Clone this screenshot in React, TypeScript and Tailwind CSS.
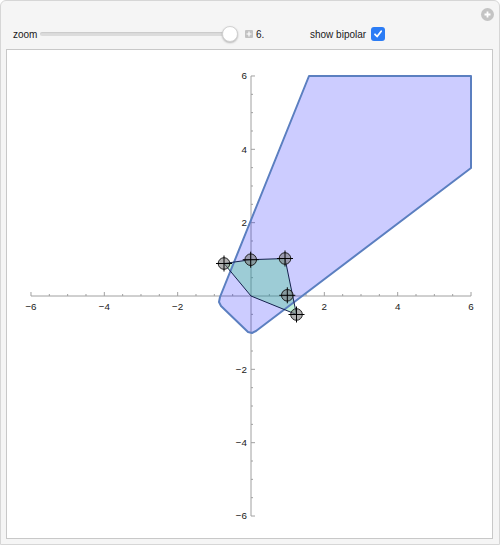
import React from "react";

const ORIGIN_X = 251;
const ORIGIN_Y = 295;
const UNIT = 36.67;

const px = (v: number) => ORIGIN_X + v * UNIT;
const py = (v: number) => ORIGIN_Y - v * UNIT;

const ticks: number[] = [];
for (let i = -12; i <= 12; i++) ticks.push(i / 2);

const labels = [-6, -4, -2, 2, 4, 6];

const bluePoints = "309,75 471,75 471,167 256,330 252,332 248,331 221,305 219,301 220,296";
const smallPoints = "224,262.5 250.7,258.7 285,257.5 296.5,313.5 251,295";

const locators: [number, number][] = [
  [224, 262.5],
  [250.7, 258.7],
  [285, 257.5],
  [287.3, 294.3],
  [296.5, 313.5],
];

const Locator = ({ x, y }: { x: number; y: number }) => (
  <g>
    <circle cx={x} cy={y} r={5.8} fill="#7a7a7a" fillOpacity={0.6} stroke="#1e1e1e" strokeWidth={1} />
    <line x1={x - 8} y1={y} x2={x + 8} y2={y} stroke="#000" strokeWidth={1} />
    <line x1={x} y1={y - 8} x2={x} y2={y + 8} stroke="#000" strokeWidth={1} />
  </g>
);

const Plot = () => (
  <svg
    width={485}
    height={488}
    viewBox="7 49 485 488"
    style={{ fontFamily: '"Liberation Sans", Arial, sans-serif' }}
  >
    {/* axes */}
    <line x1={px(-6)} y1={ORIGIN_Y} x2={px(6)} y2={ORIGIN_Y} stroke="#a0a0a0" strokeWidth={1} />
    <line x1={ORIGIN_X} y1={py(6)} x2={ORIGIN_X} y2={py(-6)} stroke="#a0a0a0" strokeWidth={1} />
    {ticks.map((t) => {
      if (t === 0) return null;
      const major = t % 2 === 0;
      const len = major ? 4 : 2;
      return (
        <g key={t}>
          <line x1={px(t)} y1={ORIGIN_Y} x2={px(t)} y2={ORIGIN_Y - len} stroke="#a0a0a0" strokeWidth={1} />
          <line x1={ORIGIN_X} y1={py(t)} x2={ORIGIN_X + len} y2={py(t)} stroke="#a0a0a0" strokeWidth={1} />
        </g>
      );
    })}
    {labels.map((v) => (
      <text key={"x" + v} x={px(v)} y={308.5} fontSize={9.8} textAnchor="middle" fill="#1a1a1a">
        {v < 0 ? "\u2212" + Math.abs(v) : v}
      </text>
    ))}
    {labels.map((v) => (
      <text key={"y" + v} x={247} y={py(v) + 3.4} fontSize={9.8} textAnchor="end" fill="#1a1a1a">
        {v < 0 ? "\u2212" + Math.abs(v) : v}
      </text>
    ))}

    {/* regions */}
    <polygon points={bluePoints} fill="#0000ff" fillOpacity={0.2} />
    <polygon points={smallPoints} fill="#32cd78" fillOpacity={0.3} />
    <polygon
      points={bluePoints}
      fill="none"
      stroke="#5b7fc0"
      strokeWidth={2}
      strokeLinejoin="round"
    />
    <polygon points={smallPoints} fill="none" stroke="#15214d" strokeWidth={1} strokeLinejoin="round" />

    {locators.map(([x, y], i) => (
      <Locator key={i} x={x} y={y} />
    ))}
  </svg>
);

const App = () => {
  return (
    <div
      className="w-[500px] h-[545px] bg-[#f5f5f5] border border-[#d6d6d6] rounded-t-[6px] overflow-hidden text-[#1a1a1a]"
      style={{ fontFamily: '"Liberation Sans", Arial, sans-serif' }}
    >
      <div className="flex justify-end pt-[7px] pr-[5px]">
        <div className="w-[13px] h-[13px] rounded-full bg-[#c4c4c4] flex items-center justify-center">
          <svg width="9" height="9" viewBox="0 0 9 9">
            <path d="M4.5 1.5v6M1.5 4.5h6" stroke="#fff" strokeWidth="1.8" />
          </svg>
        </div>
      </div>

      <div className="flex items-center h-[14px] mt-[6px] pl-[12px] text-[10px]">
        <span className="w-[27px]">zoom</span>
        <div className="relative w-[198px] h-[4px] rounded-full bg-[#dcdcdc] shadow-[inset_0_1px_1px_rgba(0,0,0,0.08)]">
          <div className="absolute left-[182px] top-[-6px] w-[16px] h-[16px] rounded-full bg-white border border-[#d2d2d2] shadow-[0_1px_2px_rgba(0,0,0,0.25)]" />
        </div>
        <div className="ml-[7px] w-[8px] h-[8px] rounded-[1px] bg-[#c2c2c2] flex items-center justify-center">
          <svg width="6" height="6" viewBox="0 0 6 6">
            <path d="M3 0.5v5M0.5 3h5" stroke="#fff" strokeWidth="1.2" />
          </svg>
        </div>
        <span className="ml-[3px] w-[54px]">6.</span>
        <span className="w-[61px]">show bipolar</span>
        <div className="w-[14px] h-[14px] rounded-[3px] bg-[#2b7cf5] flex items-center justify-center">
          <svg width="10" height="10" viewBox="0 0 10 10">
            <path d="M2 5.3l2.1 2.2L8.2 2.3" fill="none" stroke="#fff" strokeWidth="1.8" strokeLinecap="round" strokeLinejoin="round" />
          </svg>
        </div>
      </div>

      <div className="mt-[8px] ml-[5px] w-[487px] h-[490px] border border-[#c8c8c8] bg-white">
        <Plot />
      </div>
    </div>
  );
};

export default App;
